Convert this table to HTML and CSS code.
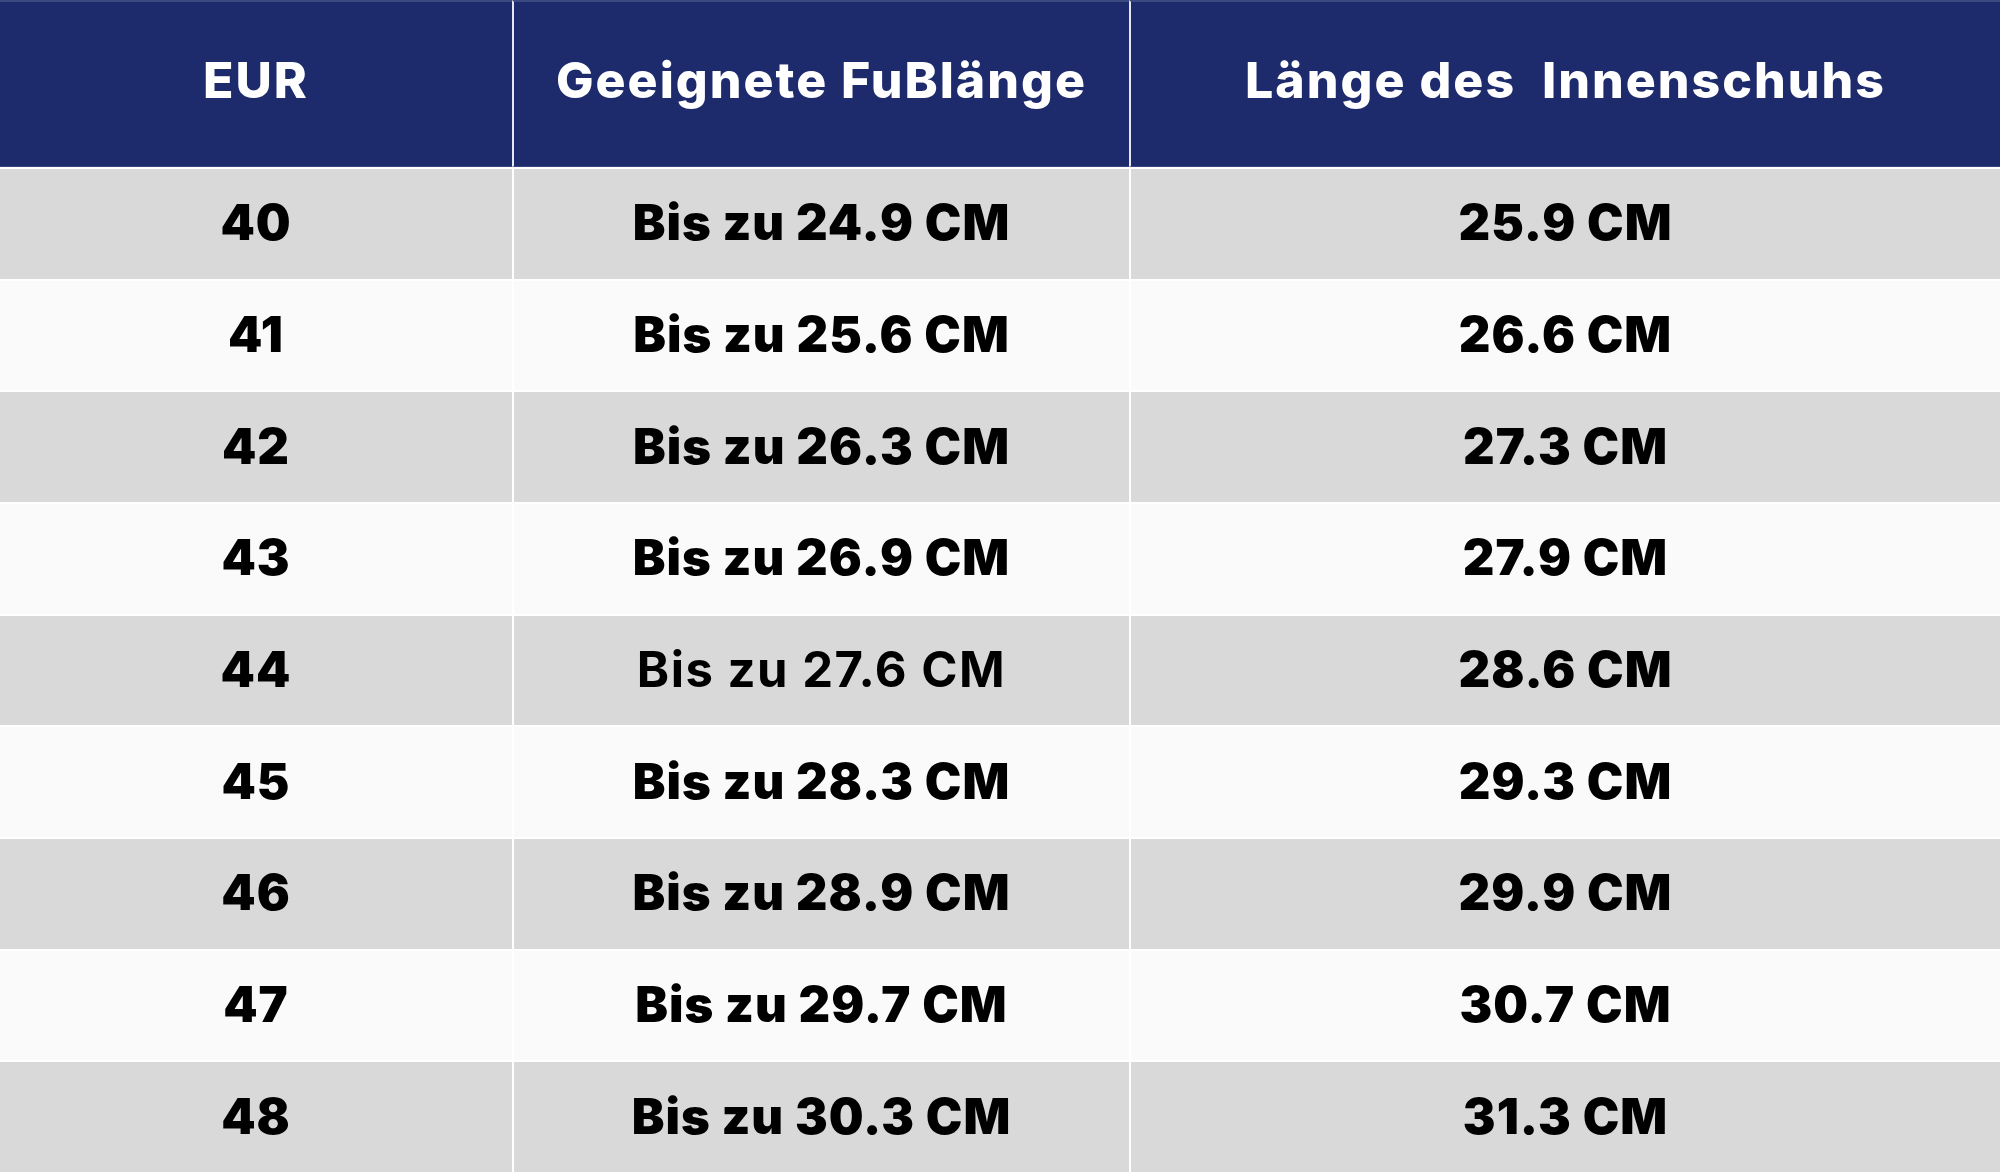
FILE: index.html
```html
<!DOCTYPE html>
<html lang="de">
<head>
<meta charset="utf-8">
<title>Größentabelle</title>
<link rel="stylesheet" href="styles.css">
</head>
<body>
<div class="table">
  <div class="cell head">EUR</div>
  <div class="cell head sep">Geeignete FuBlänge</div>
  <div class="cell head sep">Länge des &nbsp;Innenschuhs</div>

  <div class="cell gray">40</div><div class="cell gray sep">Bis zu 24.9 CM</div><div class="cell gray sep">25.9 CM</div>
  <div class="cell light">41</div><div class="cell light sep">Bis zu 25.6 CM</div><div class="cell light sep">26.6 CM</div>
  <div class="cell gray">42</div><div class="cell gray sep">Bis zu 26.3 CM</div><div class="cell gray sep">27.3 CM</div>
  <div class="cell light">43</div><div class="cell light sep">Bis zu 26.9 CM</div><div class="cell light sep">27.9 CM</div>
  <div class="cell gray">44</div><div class="cell gray sep thin">Bis zu 27.6 CM</div><div class="cell gray sep">28.6 CM</div>
  <div class="cell light">45</div><div class="cell light sep">Bis zu 28.3 CM</div><div class="cell light sep">29.3 CM</div>
  <div class="cell gray">46</div><div class="cell gray sep">Bis zu 28.9 CM</div><div class="cell gray sep">29.9 CM</div>
  <div class="cell light">47</div><div class="cell light sep">Bis zu 29.7 CM</div><div class="cell light sep">30.7 CM</div>
  <div class="cell gray">48</div><div class="cell gray sep">Bis zu 30.3 CM</div><div class="cell gray sep">31.3 CM</div>
</div>
</body>
</html>
```
FILE: styles.css
```css
html, body {
  margin: 0;
  padding: 0;
  background: #fafafa;
}

.table {
  width: 2000px;
  height: 1172px;
  display: grid;
  grid-template-columns: 512px 617px 871px;
  grid-template-rows: 167px repeat(9, 1fr);
  font-family: Inter, "Open Sans", "Liberation Sans", sans-serif;
  overflow: hidden;
}

.cell {
  box-sizing: border-box;
  display: flex;
  align-items: center;
  justify-content: center;
  color: #000;
  font-size: 49px;
  font-weight: 900;
  letter-spacing: 1px;
  border-top: 2px solid #ffffff;
  padding-bottom: 2px;
  white-space: nowrap;
}

.cell.sep {
  border-left: 2px solid #ffffff;
}

.head {
  background: #1d2b6c;
  color: #ffffff;
  font-weight: 800;
  font-size: 50px;
  letter-spacing: 2px;
  border-top: 2px solid #3c4a82;
  border-bottom: 1px solid #3a4780;
  padding-bottom: 8px;
}

.head.sep {
  border-left: 2px solid #e6e8f0;
}

.gray {
  background: #d9d9d9;
}

.light {
  background: #fafafa;
}

.thin {
  font-weight: 700;
  letter-spacing: 1.5px;
}
```
